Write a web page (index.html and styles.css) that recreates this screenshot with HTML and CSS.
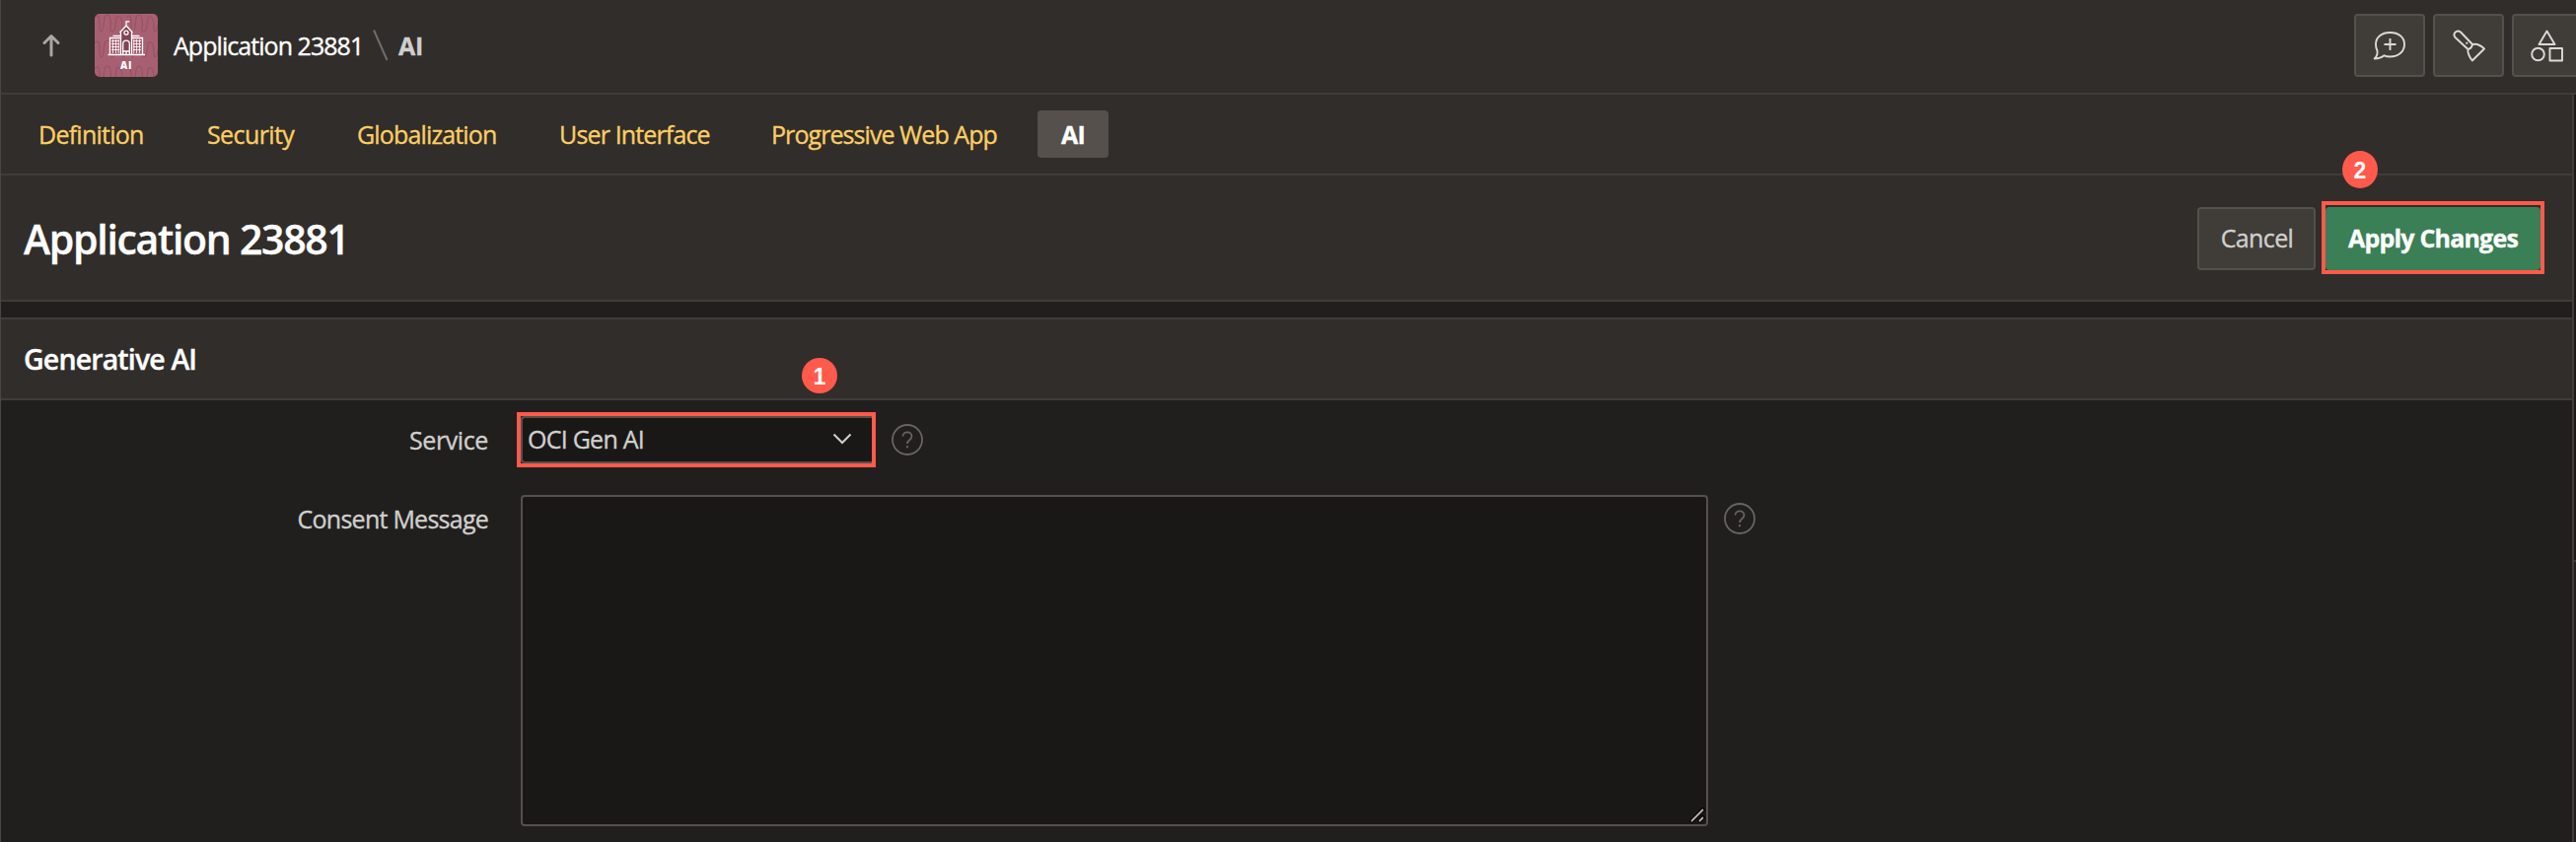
FILE: index.html
```html
<!DOCTYPE html>
<html lang="en">
<head>
<meta charset="utf-8">
<title>Application 23881</title>
<link rel="stylesheet" href="styles.css">
</head>
<body>
<header class="topbar">
  <svg class="up" viewBox="0 0 20 24"><path d="M10 22V4M3 9.500l7-7 7 7"/></svg>
  <svg class="logo" viewBox="0 0 64 64">
    <defs>
      <pattern id="waves" width="32" height="26" patternUnits="userSpaceOnUse">
        <path d="M0 4c4-5 5 0 5 8s3 8 4 0 1-11 4-11 4 8 3 13 4 6 5-2 1-10 4-9 3 8 3 12 3 4 4-4" fill="none" stroke="#98515f" stroke-width="1.2"/>
      </pattern>
    </defs>
    <rect width="64" height="64" rx="5" fill="#a76072"/>
    <rect width="64" height="64" rx="5" fill="url(#waves)"/>
    <path d="M26.500 41.500V18L32 12l5.500 6v23.500z" fill="#7f4554"/>
    <g fill="none" stroke="#fff" stroke-width="1.300">
      <path d="M13.500 41.500h37.500M15.500 41V24.500h11M37.500 24.500h11V41M26.500 41V18.500M37.500 18.500V41M25.500 19L32 12l6.500 7M32 12V7.800h3.300M18.500 22.300h8M37.500 22.300h8"/>
      <circle cx="32" cy="19.200" r="2"/>
      <path d="M28.700 41V30.500a3.300 3.300 0 0 1 6.600 0V41M29 38h6M32 38v3"/>
      <path d="M18.500 26v14M21.500 26v14M24.200 26v14M39.800 26v14M42.500 26v14M45.500 26v14M17 27.500h8M17 30.500h8M17 33.500h8M17 36.500h8M39 27.500h8M39 30.500h8M39 33.500h8M39 36.500h8" stroke-width=".8"/>
    </g>
    <text x="32" y="56" text-anchor="middle" class="logo-text">AI</text>
  </svg>
  <a class="crumb">Application 23881</a>
  <svg class="slash" viewBox="0 0 16 32"><path d="M1 .5l13.500 30.500"/></svg>
  <span class="crumb here">AI</span>
  <div class="tools">
    <div class="tool"><svg viewBox="0 0 36 36"><path d="M5.500 23.500c-1-2-1.500-4-1.500-6.500C4 9.500 10 5 18.500 5S33 9.500 33 17s-6 12.500-14.500 12.500c-2.500 0-4.500-.5-6-1.200-3 2.500-6 3.200-9.800 3.200 2.200-2 3.300-4 2.800-8z"/><path d="M12.500 17h12M18.500 11v12"/></svg></div>
    <div class="tool"><svg viewBox="0 0 36 36"><path d="M17.500 22L4.500 10C1.500 6 6 1.500 10 4.500L22 17c-.5 3-2 4.500-4.500 5zM17.500 22c-1 2.500 1.500 8 4.300 11.500L34 21.500c-3-3-8-5.500-12-4.500"/><path d="M15.300 15.700h2"/></svg></div>
    <div class="tool"><svg viewBox="0 0 36 36"><path d="M17.500 3.500L25.500 17H9.500zM20.500 21h12.500v12.500H20.500z"/><circle cx="8.500" cy="27" r="6.300"/></svg></div>
  </div>
</header>
<div class="page">
<nav class="tabs">
  <a class="tab t1">Definition</a><a class="tab t2">Security</a><a class="tab t3">Globalization</a><a class="tab t4">User Interface</a><a class="tab t5">Progressive Web App</a><a class="tab on">AI</a>
</nav>
<section class="titlebar">
  <h1>Application 23881</h1>
  <div class="actions">
    <div class="btn cancel">Cancel</div>
    <div class="mark mark-apply"><div class="btn hot">Apply Changes</div><span class="badge b2">2</span></div>
  </div>
</section>
<section class="region">
  <h2>Generative AI<span class="badge b1">1</span></h2>
  <div class="field">
    <div class="label l1">Service</div>
    <div class="mark mark-select"><div class="select"><span>OCI Gen AI</span><svg viewBox="0 0 20 12"><path d="M1.500 1.500l8.500 8.500 8.500-8.500"/></svg></div></div>
    <svg class="help" viewBox="0 0 32 32"><circle cx="16" cy="16" r="15"/><path d="M11.500 12.500c0-5.500 9-5.500 9 0 0 4-4.500 3.500-4.500 7.500M16 22v2.200"/></svg>
  </div>
  <div class="field second">
    <div class="label l2">Consent Message</div>
    <div class="area"><svg viewBox="0 0 16 16"><path class="grip-shadow" d="M1.500 14.500L15 1M9.500 14.500l5.500-5.500"/><path d="M2 14L14 2M10 14l4-4"/></svg></div>
    <svg class="help" viewBox="0 0 32 32"><circle cx="16" cy="16" r="15"/><path d="M11.500 12.500c0-5.500 9-5.500 9 0 0 4-4.500 3.500-4.500 7.500M16 22v2.200"/></svg>
  </div>
</section>
</div>
<div class="gutter"></div>
</body>
</html>
```
FILE: styles.css
```css
* { box-sizing: border-box; }
body {
  margin: 0; width: 2612px; height: 854px; overflow: hidden;
  display: grid; grid-template: 96px 758px / 2610px 2px;
  background: #201f1d; color: #d0cfcd;
  font-family: "Open Sans", "Noto Sans", sans-serif; font-size: 25px; line-height: 34px;
  white-space: nowrap; -webkit-text-stroke: .35px currentColor;
}
svg { fill: none; flex: none; display: block; }

.topbar {
  grid-column: 1 / 3; display: flex; align-items: center;
  background: #312d2a; border-bottom: 2px solid #403c38; border-left: 1px solid #4a4643;
  padding-bottom: 2px;
}
.up { width: 20px; height: 24px; margin-left: 41px; stroke: #aaa6a2; stroke-width: 3; stroke-linecap: round; stroke-linejoin: round; }
.logo { width: 64px; height: 64px; margin-left: 34px; }
.logo-text { font: 800 10px "Open Sans", sans-serif; fill: #fff; letter-spacing: .6px; -webkit-text-stroke: 0; }
.crumb { width: 192px; margin-left: 16px; color: #fff; letter-spacing: -.95px; }
.slash { width: 16px; height: 32px; margin-left: 10px; margin-top: -1px; stroke: #706c69; stroke-width: 2; }
.here { width: auto; color: #d0cfcd; font-weight: 700; margin-left: 10px; letter-spacing: -.2px; }
.tools { display: flex; gap: 8px; margin-left: auto; margin-right: -7px; }
.tool {
  width: 72px; height: 64px; border: 2px solid #55504c; border-radius: 4px; background: #403c38;
  display: flex; align-items: center; justify-content: center;
}
.tool svg { width: 36px; height: 36px; stroke: #dcdad8; stroke-width: 1.900; stroke-linejoin: round; }

.page { border-left: 1px solid #4a4643; border-right: 2px solid #403c38; min-width: 0; }
.gutter { height: 474px; border-bottom: 2px solid #403c38; background: #1a1917; }

.tabs {
  height: 82px; background: #312d2a; border-bottom: 2px solid #403c38;
  display: flex; align-items: center; padding: 0 0 1px 38px;
}
.tab { color: #fbce65; letter-spacing: -.85px; }
.t1 { width: 171px; letter-spacing: -.75px; }
.t2 { width: 152px; letter-spacing: -.6px; }
.t3 { width: 205px; }
.t4 { width: 215px; }
.t5 { width: 270px; letter-spacing: -.93px; }
.on {
  width: 72px; height: 48px; line-height: 48px; border-radius: 4px; background: #55504c;
  color: #fff; font-weight: 700; text-align: center; position: relative;
}

.titlebar {
  height: 128px; background: #312d2a; border-bottom: 2px solid #403c38;
  display: flex; justify-content: space-between; align-items: flex-start; padding: 26px 28px 0 23px;
}
h1 { margin: 10px 0 0; font-size: 41px; line-height: 56px; font-weight: 600; color: #fff; letter-spacing: -1.3px; }
.actions { display: flex; gap: 6px; }
.btn { height: 64px; border-radius: 4px; text-align: center; }
.cancel {
  width: 120px; margin-top: 6px; border: 2px solid #55504c; background: #403c38;
  line-height: 59px; letter-spacing: -.6px; padding-left: 1px;
}
.hot { background: #3a7f55; color: #fff; font-weight: 700; line-height: 63px; letter-spacing: -.8px; }
.mark { border: 4px solid #ff5a4b; }
.mark-apply { position: relative; width: 226px; height: 74px; padding-top: 2px; }
.badge {
  position: absolute; width: 36px; height: 36px; border-radius: 50%; background: #ff5a4b; color: #fff;
  font: 700 23px/38px "Liberation Sans", sans-serif; letter-spacing: 0; text-align: center; -webkit-text-stroke: 0;
}
.b2 { left: 17px; top: -55px; height: 38px; line-height: 40px; }
.b1 { left: 812px; top: 39px; }

.region { margin-top: 16px; }
h2 {
  margin: 0; height: 84px; position: relative; background: #312d2a;
  border: solid #403c38; border-width: 2px 0; padding-left: 23px;
  color: #fff; font-size: 28.500px; line-height: 80px; font-weight: 600; letter-spacing: -.85px;
}
.field { display: flex; align-items: flex-start; padding-top: 12px; }
.label { width: 494px; margin-right: 29px; text-align: right; }
.l1 { letter-spacing: -.4px; padding-top: 11px; }
.l2 { letter-spacing: -.75px; margin-right: 33px; padding-top: 7px; }
.mark-select { width: 364px; height: 56px; }
.select {
  height: 48px; border: 2px solid #55504c; border-right: 0; border-radius: 4px 0 0 4px; background: #191816;
  display: flex; align-items: center; justify-content: space-between; padding: 0 20px 2px 5px;
  letter-spacing: -.75px;
}
.select svg { width: 20px; height: 12px; stroke: #d0cfcd; stroke-width: 2; }
.help { width: 32px; height: 32px; margin: 12px 0 0 16px; stroke: #686461; stroke-width: 1.800; }
.second { padding-top: 28px; }
.second .help { margin-top: 8px; }
.area {
  width: 1204px; height: 336px; border: 2px solid #55504c; border-radius: 4px; background: #191816;
  display: flex; align-items: flex-end; justify-content: flex-end; padding: 0 1px 1px 0;
}
.area svg { width: 16px; height: 16px; stroke: #b5b3b1; stroke-width: 1.800; }
.area .grip-shadow { stroke: #000; stroke-width: 4; }
```
